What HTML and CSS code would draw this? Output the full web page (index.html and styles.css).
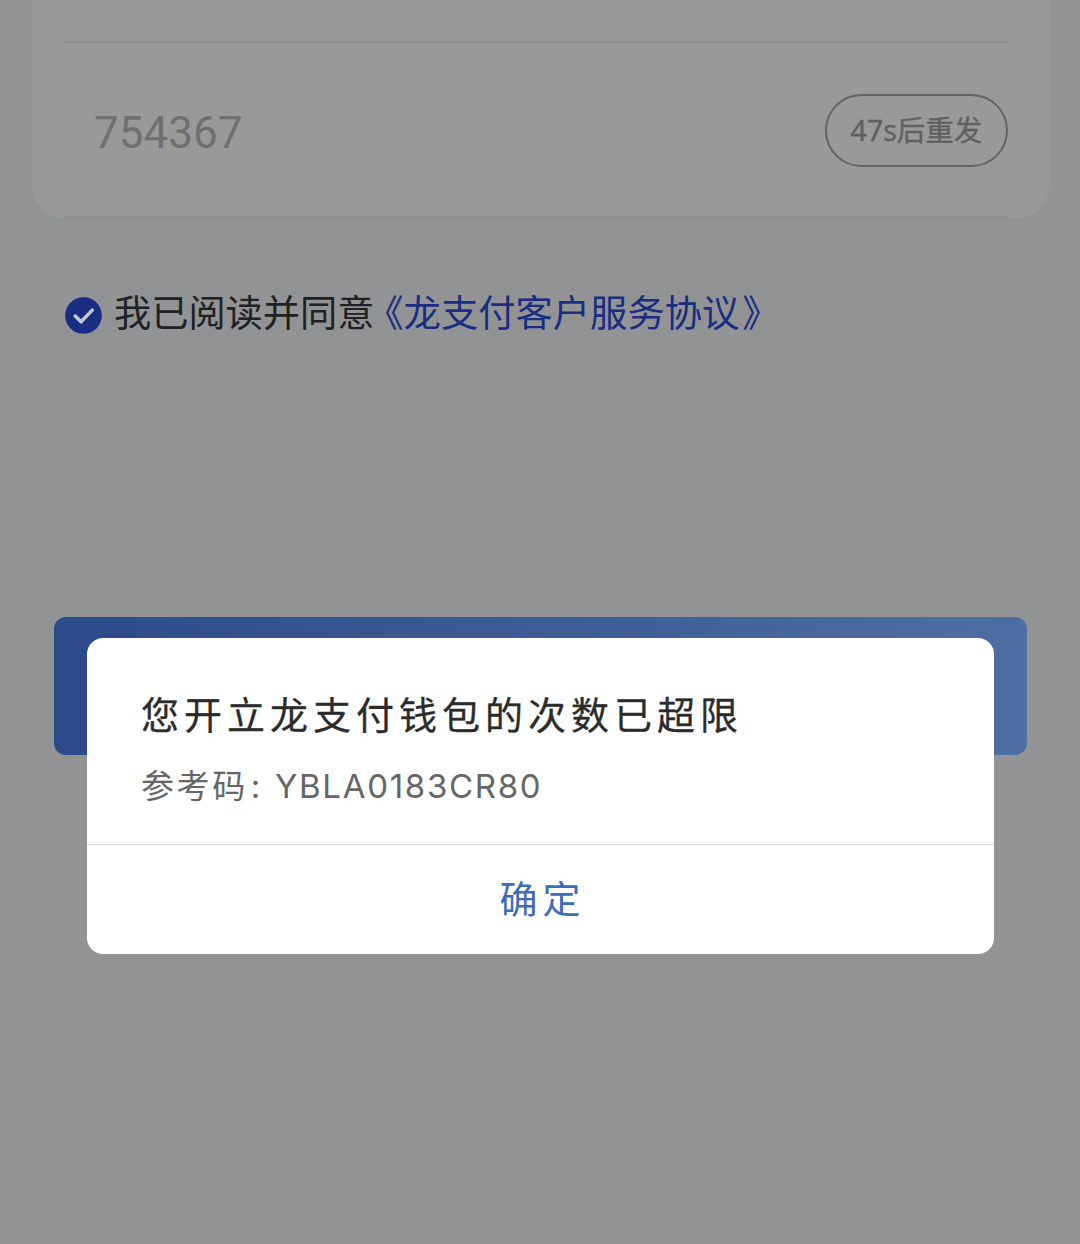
FILE: index.html
```html
<!DOCTYPE html>
<html lang="zh-CN">
<head>
<meta charset="utf-8">
<title>龙支付</title>
<link rel="stylesheet" href="styles.css">
</head>
<body>
<main class="page">
  <section class="card">
    <div class="card-top"></div>
    <div class="code-row">
      <span class="code">754367</span>
      <span class="resend">47s后重发</span>
    </div>
    <div class="card-rule"></div>
  </section>
  <div class="agree">
    <svg class="check" viewBox="0 0 38 38" aria-hidden="true">
      <circle cx="19" cy="19" r="18.8" fill="#1b2d82"/>
      <path d="M10.5 19.5l6 6L28 13.5" fill="none" stroke="#c2c5d2" stroke-width="3.6" stroke-linecap="round" stroke-linejoin="round"/>
    </svg>
    <span class="agree-text">我已阅读并同意<span class="agree-link">《龙支付客户服务协议<span class="agree-close">》</span></span></span>
  </div>
  <div class="submit"></div>
</main>
<div class="dialog">
  <div class="dialog-body">
    <div class="dialog-title">您开立龙支付钱包的次数已超限</div>
    <div class="dialog-sub">参考码<span class="ref-colon">:</span><span class="ref-code">YBLA0183CR80</span></div>
  </div>
  <div class="dialog-action">确定</div>
</div>
</body>
</html>
```
FILE: styles.css
```css
* { box-sizing: border-box; }
html, body { margin: 0; padding: 0; }
body {
  width: 1080px;
  height: 1244px;
  overflow: hidden;
  position: relative;
  background: #929394;
  font-family: "Noto Sans CJK SC", "Noto Sans", sans-serif;
}
.page { display: flex; flex-direction: column; }
.card {
  margin-left: 32px;
  width: 1017px;
  height: 218px;
  padding: 0 41px 0 32px;
  background: #999999;
  border-radius: 0 0 32px 32px;
  display: flex;
  flex-direction: column;
}
.card-top { height: 43px; border-bottom: 2px solid #8d8d8d; flex: none; }
.code-row {
  flex: 1;
  display: flex;
  align-items: center;
  justify-content: space-between;
  padding: 2px 0 0 30px;
}
.code {
  font-family: "Roboto", sans-serif;
  font-size: 44px;
  color: #6f6f6f;
  position: relative;
  top: 2px;
}
.resend {
  width: 183px;
  height: 73px;
  border: 2px solid #636363;
  border-radius: 37px;
  display: flex;
  align-items: center;
  justify-content: center;
  font-size: 28.5px;
  line-height: 1;
  color: #606060;
  -webkit-text-stroke: 0.3px #606060;
  font-family: "Noto Sans", "Noto Sans CJK SC", sans-serif;
}
.card-rule { height: 2px; background: #909090; flex: none; }
.agree {
  margin: 74px 0 0 65px;
  height: 38px;
  display: flex;
  align-items: center;
  gap: 12px;
}
.check { width: 37px; height: 37px; flex: none; margin-top: 8px; }
.agree-text { font-size: 37.2px; line-height: 38px; color: #202124; white-space: nowrap; }
.agree-link { color: #1b2d82; font-size: 37.3px; margin-left: -8px; }
.agree-close { margin-left: 3px; }
.submit {
  margin: 287px 0 0 54px;
  width: 973px;
  height: 138px;
  border-radius: 12px;
  background: linear-gradient(90deg, #2c4a8a, #4e6ea3);
}
.dialog {
  position: absolute;
  left: 87px;
  top: 638px;
  width: 907px;
  height: 316px;
  background: #ffffff;
  border-radius: 16px;
  display: flex;
  flex-direction: column;
}
.dialog-body {
  height: 207px;
  padding: 51px 54px 0;
  border-bottom: 1px solid #dcdde0;
  flex: none;
}
.dialog-title {
  font-size: 38px;
  line-height: 48px;
  letter-spacing: 5px;
  color: #2b2b2b;
  white-space: nowrap;
  -webkit-text-stroke: 0.3px #2b2b2b;
}
.dialog-sub {
  margin-top: 25px;
  font-size: 33px;
  line-height: 48px;
  letter-spacing: 2.6px;
  color: #666666;
  font-family: "Inter", "Noto Sans CJK SC", sans-serif;
  white-space: nowrap;
}
.ref-colon { margin: 0 12px 0 3px; }
.ref-code { letter-spacing: 1.7px; }
.dialog-action {
  flex: 1;
  display: flex;
  align-items: center;
  justify-content: center;
  padding: 0 0 6px 4px;
  font-size: 38px;
  letter-spacing: 5px;
  color: #3c6db5;
}
```
